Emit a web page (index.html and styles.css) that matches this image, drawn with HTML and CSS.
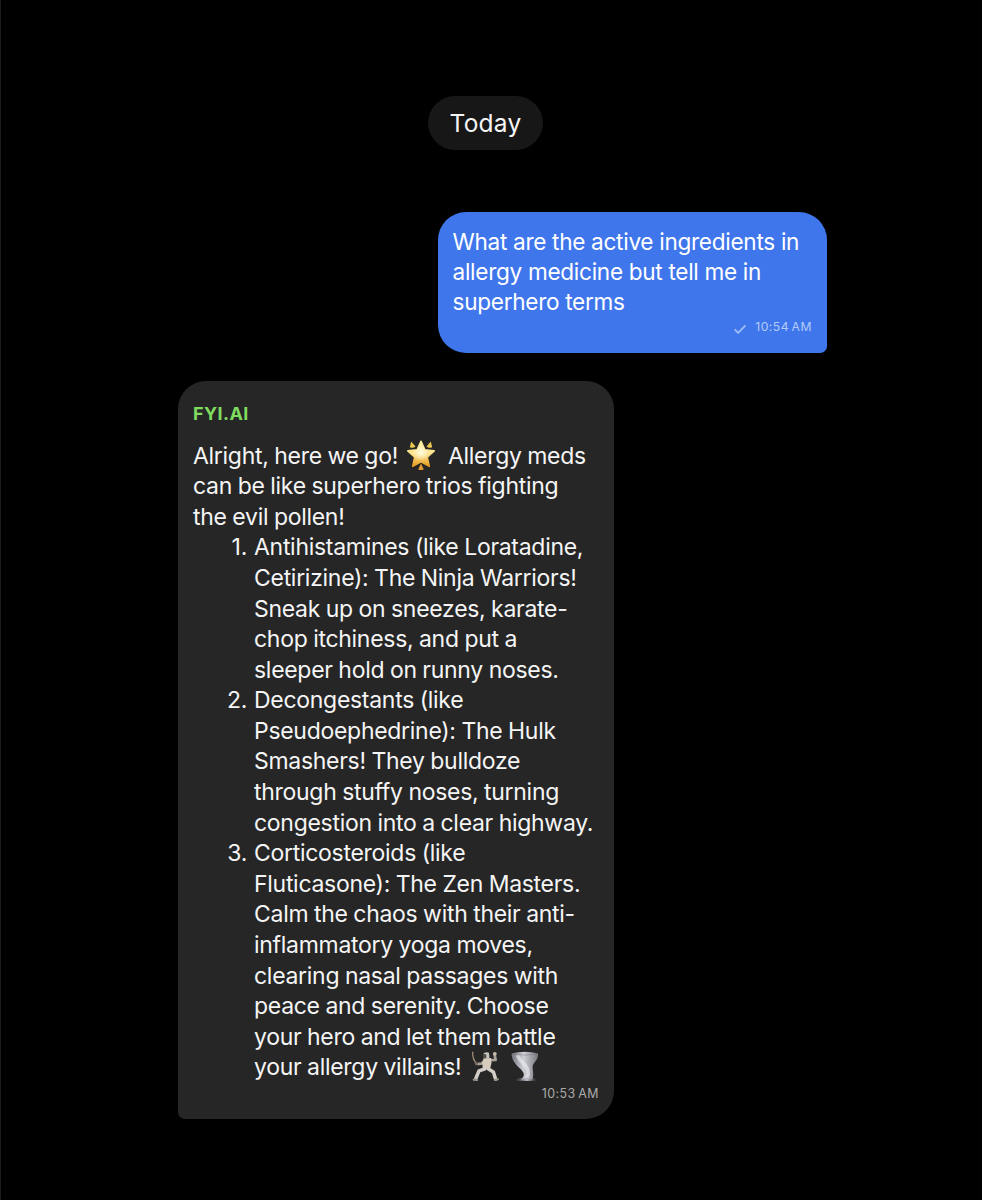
FILE: index.html
```html
<!DOCTYPE html>
<html lang="en">
<head>
<meta charset="utf-8">
<title>Chat</title>
<link rel="stylesheet" href="styles.css">
</head>
<body>
<main class="chat">
  <div class="day">Today</div>

  <article class="bubble sent">
    <p class="text">What are the active ingredients in<br>allergy medicine but tell me in<br>superhero terms</p>
    <footer class="meta">
      <svg class="check" viewBox="0 0 14 12"><path d="M2.2 6.8 5.2 9.8 12 2.8"/></svg>
      <time>10:54 AM</time>
    </footer>
  </article>

  <article class="bubble received">
    <h2 class="sender">FYI.AI</h2>
    <p class="text">Alright, here we go! <svg class="emoji star" viewBox="0 0 30 30" role="img" aria-label="glowing star">
        <defs>
          <linearGradient id="gold" x1="0" y1="0" x2="0" y2="1"><stop offset="0" stop-color="#fff3a0"/><stop offset=".5" stop-color="#fbe08a"/><stop offset="1" stop-color="#e89a1c"/></linearGradient>
          <radialGradient id="glow" cx=".5" cy=".45" r=".35"><stop offset="0" stop-color="#fffde0"/><stop offset="1" stop-color="#fffde0" stop-opacity="0"/></radialGradient>
        </defs>
        <path fill="url(#gold)" stroke="url(#gold)" stroke-width="1.6" stroke-linejoin="round" d="M15 1.3 18.9 9.9 28.2 10.8 21.3 17.2 23.3 26.3 15 21.8 6.7 26.3 8.7 17.2 1.8 10.8 11.1 9.9Z"/>
        <path fill="url(#glow)" d="M15 1.3 18.9 9.9 28.2 10.8 21.3 17.2 23.3 26.3 15 21.8 6.7 26.3 8.7 17.2 1.8 10.8 11.1 9.9Z"/>
        <path fill="#e9c64b" d="M5.2 1.4 9.5 6.4Q7.5 8.6 3.8 7.2ZM24.8 1.4 20.5 6.4Q22.5 8.6 26.2 7.2Z"/>
        <path fill="#df9a30" d="M15 23.4 17.8 29.4Q15 31 12.2 29.4Z"/>
      </svg> Allergy meds<br>can be like superhero trios fighting<br>the evil pollen!</p>
    <ol class="list">
      <li>Antihistamines (like Loratadine,<br>Cetirizine): The Ninja Warriors!<br>Sneak up on sneezes, karate-<br>chop itchiness, and put a<br>sleeper hold on runny noses.</li>
      <li>Decongestants (like<br>Pseudoephedrine): The Hulk<br>Smashers! They bulldoze<br>through stuffy noses, turning<br>congestion into a clear highway.</li>
      <li>Corticosteroids (like<br>Fluticasone): The Zen Masters.<br>Calm the chaos with their anti-<br>inflammatory yoga moves,<br>clearing nasal passages with<br>peace and serenity. Choose<br>your hero and let them battle<br>your allergy villains! <svg class="emoji fencer" viewBox="0 0 30 30" role="img" aria-label="fencer">
          <path fill="none" stroke="#a8957a" stroke-width="1.2" stroke-linecap="round" d="M1.7 1Q1.2 8 5.6 12.6"/>
          <path fill="none" stroke="#a9a198" stroke-width="2.7" stroke-linecap="round" stroke-linejoin="round" d="M6 13 10.5 12.6 14 9.5M19 9.2 24.6 9 23.6 3.2"/>
          <path fill="#d6cdbd" d="M12.5 7.5 20 7 20.5 12 19 18 12 19 11.2 12Z"/>
          <path fill="none" stroke="#d3cfc8" stroke-width="3.5" stroke-linecap="round" stroke-linejoin="round" d="M13.5 18 8 19.8 5 27M17.5 18 22.4 21 24.6 28"/>
          <path fill="none" stroke="#9b948b" stroke-width="2.2" stroke-linecap="round" d="M2.8 28.6 6 29M24.2 29 26.8 28.3"/>
          <path fill="#c8c4bf" d="M12.6 2.5Q15 .2 18 1.8L18.5 6.5 15.5 8.4 12.8 7Z"/>
          <path fill="#4e4b49" d="M12.2 3 15.2 3.2 15.4 7.4 13 6.8Z"/>
          <circle cx="5.4" cy="12.6" r="1.7" fill="#776b61"/>
          <circle cx="23.8" cy="2.8" r="1.9" fill="#c7b9a8"/>
        </svg><svg class="emoji tornado" viewBox="0 0 30 30" role="img" aria-label="tornado">
          <defs>
            <linearGradient id="wind"><stop offset="0" stop-color="#74747d"/><stop offset=".45" stop-color="#cfcfd8"/><stop offset="1" stop-color="#777780"/></linearGradient>
            <linearGradient id="dust"><stop offset="0" stop-color="#777780" stop-opacity="0"/><stop offset=".55" stop-color="#bdbdc8"/><stop offset="1" stop-color="#777780" stop-opacity="0"/></linearGradient>
          </defs>
          <path fill="url(#wind)" d="M1.5 2.5Q15-.8 28 2.5C28.5 8 25 10.5 23.2 13.5 21.5 17 24.5 21 22.5 28.5L11 28.5C14.5 25.5 15 22.5 11 18.5 5 13 2 9.5 1.5 2.5Z"/>
          <path fill="none" stroke="#f4f4f8" stroke-width="3.6" stroke-linecap="round" opacity=".55" d="M8 5.5C11 12 17.5 14 18 20Q19 24 16.5 27"/>
          <path fill="none" stroke="#5f5f69" stroke-width=".8" opacity=".45" d="M3 3.4Q15 4.8 27 3.4"/>
          <path fill="url(#dust)" d="M5 28Q17 25 27 28V30H5Z"/>
        </svg></li>
    </ol>
    <footer class="meta"><time>10:53 AM</time></footer>
  </article>
</main>
</body>
</html>
```
FILE: styles.css
```css
* {
  box-sizing: border-box;
}

body {
  margin: 0;
  background: #000;
  color: #f5f5f5;
  font-family: Inter, "Liberation Sans", sans-serif;
}

.chat {
  display: flex;
  flex-direction: column;
  height: 1200px;
  padding: 96px 155px 0 177px;
  border-left: 1px solid #1c1c1c;
  overflow: hidden;
}

.day {
  width: 115px;
  height: 54px;
  margin-left: 250px;
  border-radius: 27px;
  background: #171717;
  font-size: 24.5px;
  line-height: 54px;
  letter-spacing: 0.2px;
  text-align: center;
}

.bubble {
  font-size: 23px;
  letter-spacing: -0.29px;
  word-spacing: -0.5px;
}

.text,
.list {
  margin: 0;
  white-space: nowrap;
}

.sent {
  align-self: flex-end;
  width: 389px;
  height: 141px;
  margin-top: 62px;
  padding: 15px 15px 0 14.5px;
  border-radius: 28px 28px 7px 28px;
  background: #3f76eb;
  color: #fff;
  font-size: 22.6px;
  line-height: 30px;
  word-spacing: -0.1px;
}

.received {
  width: 436px;
  height: 738px;
  margin-top: 28px;
  padding: 20px 15px 0;
  border-radius: 28px 28px 28px 7px;
  background: #262626;
  line-height: 30.58px;
}

.sender {
  margin: 0 0 14.7px;
  color: #80dc5f;
  font-size: 18px;
  font-weight: 700;
  line-height: 25px;
  letter-spacing: 0.4px;
}

.list {
  padding-left: 61px;
  list-style: none;
  counter-reset: item;
}

.list li {
  position: relative;
  counter-increment: item;
}

.list li::before {
  content: counter(item) ".";
  position: absolute;
  right: 100%;
  margin-right: 7px;
}

.emoji {
  width: 30px;
  height: 30px;
  margin: -8px 0;
  vertical-align: 2px;
}

.star {
  margin-left: 2.5px;
  margin-right: 6px;
}

.fencer {
  margin-left: 3.5px;
}

.tornado {
  margin-left: 9px;
}

.meta {
  display: flex;
  align-items: center;
  justify-content: flex-end;
  gap: 8px;
  height: 20px;
  font-size: 12.2px;
  line-height: 20px;
  letter-spacing: 0.5px;
  word-spacing: -1.5px;
}

.sent .meta {
  color: #b3cbf8;
}

.received .meta {
  margin-top: 1px;
  color: #aaa;
  font-size: 12.4px;
}

.check {
  width: 14px;
  height: 12px;
  margin-top: 3px;
  fill: none;
  stroke: #9fbef6;
  stroke-width: 1.8;
  stroke-linecap: round;
  stroke-linejoin: round;
}
```
